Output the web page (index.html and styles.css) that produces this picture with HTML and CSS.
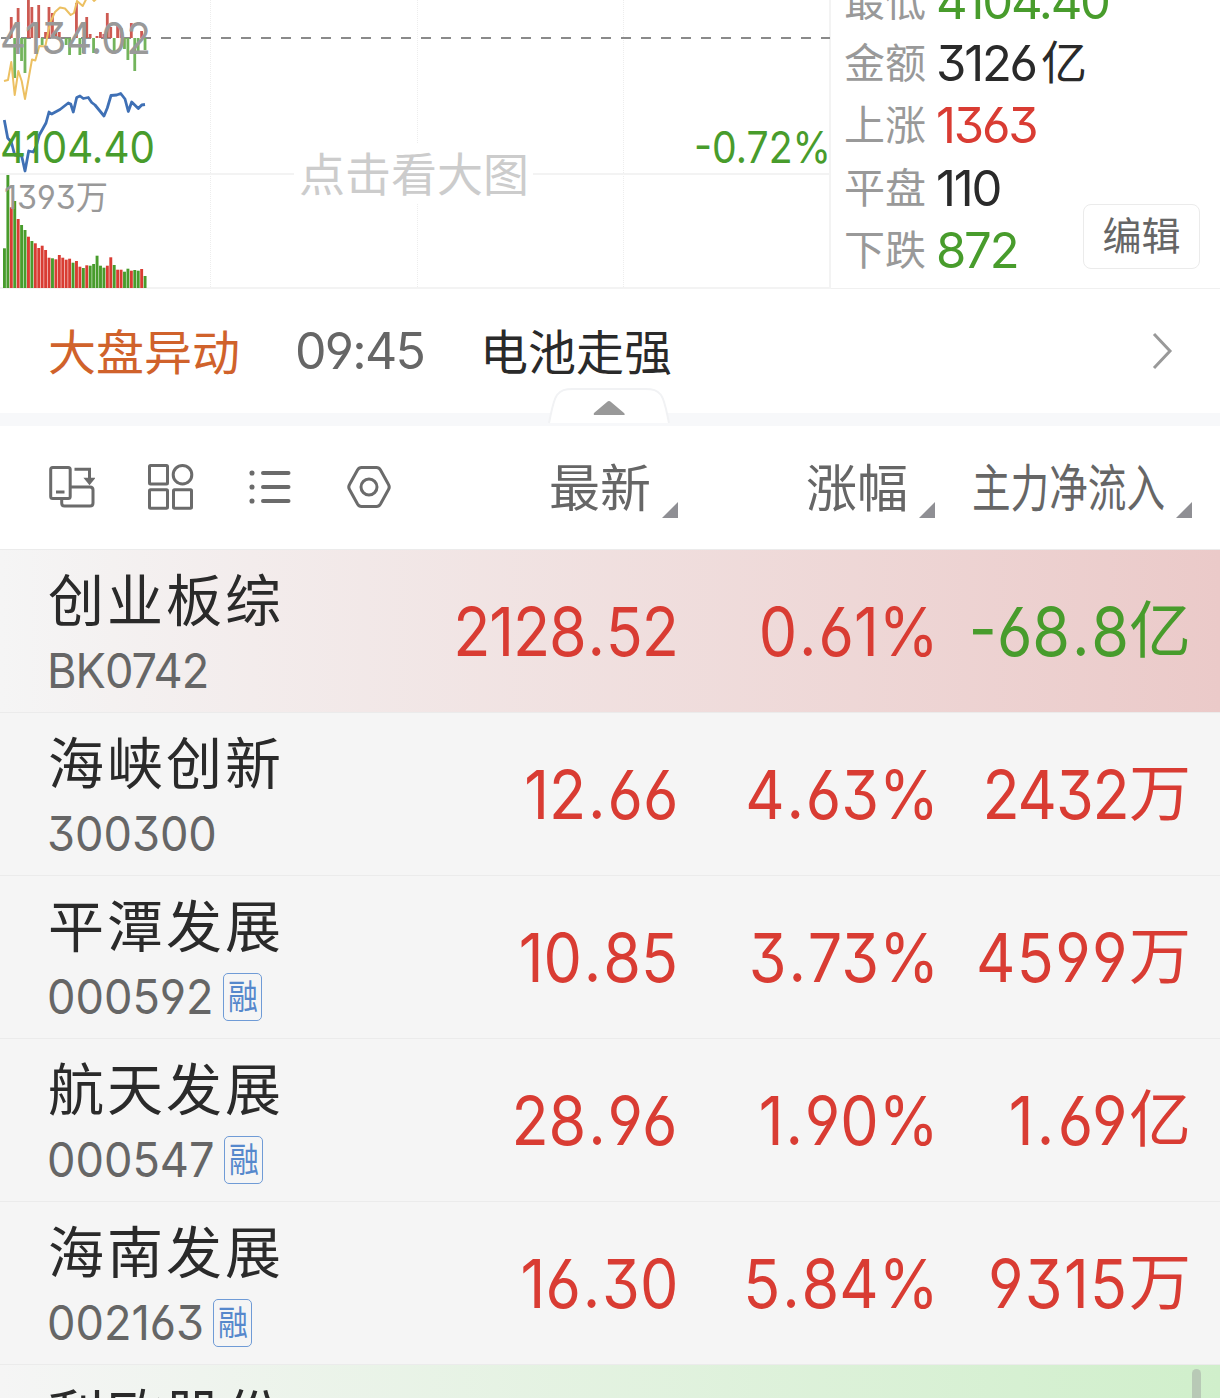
FILE: index.html
```html
<!DOCTYPE html>
<html lang="zh-CN">
<head>
  <meta charset="UTF-8">
  <title>自选股</title>
  <meta name="viewport" content="width=device-width, initial-scale=1">
  <link rel="stylesheet" href="styles.css">
</head>
<body>

  <!-- 大盘分时 -->
  <section class="market">
    <svg class="chart" width="831" height="289" viewBox="0 0 831 289">
      <g class="grid-dots">
        <path d="M210.5 0V288M417.5 0V288M623.5 0V288" />
      </g>
      <path class="grid" d="M0 174H831M0 288H831M830 0V289" />
      <path class="mid-line" d="M1 38H830" />
      <g id="diff-bars"></g>
      <g id="volume-bars"></g>
      <polyline class="line-avg" points="4,81 8,80 11.3,62 14.7,95 18.3,71 21.7,81 25,99 28.7,78 32,59.5 35.3,60.5 39.3,46 45.3,46.5 50,23 55,12 60,7.5 65,8.5 70.7,15 74,13 77,1 82.7,6 87.3,-3 91.7,-2 94,1 97.3,-2" />
      <polyline class="line-price" points="4.3,120 7.7,138 11.3,142 14.7,155 21.7,156 25,171 28.7,151 33.3,152 36,147 39.3,135 46,123 49,112 51.7,114 60,109.5 68.3,103 70.7,104 73.3,112 76.7,97.5 80,96 83.3,98.5 88.3,97.5 91.7,102.5 95,105 104,116 107.3,108 111,95.5 116.7,95 120.7,93.5 125,99 128.3,111.5 131.7,102 138.3,108.5 141.7,105 145,104.5" />
      <text class="label-gray" x="0" y="54" font-size="44" textLength="151" lengthAdjust="spacingAndGlyphs">4134.02</text>
      <text class="label-green" x="0" y="162.500" font-size="44" textLength="155" lengthAdjust="spacingAndGlyphs">4104.40</text>
      <text class="label-green" x="694" y="162.500" font-size="44" textLength="137" lengthAdjust="spacingAndGlyphs">-0.72%</text>
      <text class="label-gray" x="4" y="209" font-size="33" textLength="104" lengthAdjust="spacingAndGlyphs">1393万</text>
      <rect x="294" y="144" width="239" height="60" fill="#fff" />
      <text class="label-tip" x="299" y="191" font-size="46">点击看大图</text>
    </svg>

    <div class="stats">
      <div class="stat"><span class="stat-name">最低</span><span class="stat-value down">4104.40</span></div>
      <div class="stat"><span class="stat-name">金额</span><span class="stat-value">3126<span class="stat-unit">亿</span></span></div>
      <div class="stat"><span class="stat-name">上涨</span><span class="stat-value up">1363</span></div>
      <div class="stat"><span class="stat-name">平盘</span><span class="stat-value">110</span></div>
      <div class="stat"><span class="stat-name">下跌</span><span class="stat-value down">872</span></div>
      <button class="edit-button">编辑</button>
    </div>
  </section>

  <!-- 大盘异动 -->
  <section class="news">
    <span class="news-tag">大盘异动</span>
    <span class="news-time">09:45</span>
    <span class="news-title">电池走强</span>
    <svg class="news-arrow" width="24" height="40" viewBox="0 0 24 40">
      <path d="M4 3L20 20L4 37" />
    </svg>
  </section>

  <div class="divider">
    <svg class="collapse-tab" width="124" height="37" viewBox="0 0 124 37">
      <path class="tab-shape" d="M2 36C5 22 6 14 10 8C14 3 18 2 26 2H98C106 2 110 3 114 8C118 14 119 22 122 36" />
      <path class="tab-arrow" d="M47 26Q46 28 48 28H76Q79 28 77 26L64 15Q62 13 60 15Z" />
    </svg>
  </div>

  <!-- 工具栏 + 表头 -->
  <header class="toolbar">
    <div class="tools">
      <svg width="48" height="48" viewBox="0 0 48 48">
        <rect x="3.700" y="4.500" width="19.500" height="31" rx="2" />
        <path d="M9 29H17.500M23.500 24H43Q46 24 46 27V40Q46 43 43 43H17.500Q14.700 43 14.700 40V36M27.500 6.300H42.500V16" />
        <path class="solid" d="M38 15.500H47L42.500 21Z" />
      </svg>
      <svg width="48" height="48" viewBox="0 0 48 48">
        <rect x="3.500" y="2.500" width="18" height="18.500" rx="1" />
        <circle cx="36.500" cy="11.700" r="9.300" />
        <rect x="3.500" y="26.800" width="18" height="18.500" rx="1" />
        <rect x="27.500" y="26.800" width="18" height="18.500" rx="1" />
      </svg>
      <svg width="48" height="48" viewBox="0 0 48 48">
        <path class="thick" d="M17 10H42.500M17 24H42.500M17 38H42.500" />
        <circle class="solid" cx="6" cy="10" r="1.800" />
        <circle class="solid" cx="6" cy="24" r="1.800" />
        <circle class="solid" cx="6" cy="38" r="1.800" />
      </svg>
      <svg width="48" height="48" viewBox="0 0 48 48">
        <path d="M16.500 4.500H31.500Q34 4.500 35.500 7L43.500 21.500Q45 24 43.500 26.500L35.500 41Q34 43.500 31.500 43.500H16.500Q14 43.500 12.500 41L4.500 26.500Q3 24 4.500 21.500L12.500 7Q14 4.500 16.500 4.500Z" />
        <circle cx="24" cy="24" r="8" />
      </svg>
    </div>
    <div class="col-head price">最新<i class="sort"></i></div>
    <div class="col-head change">涨幅<i class="sort"></i></div>
    <div class="col-head flow"><span class="narrow">主力净流入</span><i class="sort"></i></div>
  </header>

  <!-- 股票列表 -->
  <main class="list">
    <div class="row flash-red">
      <div class="stock">
        <div class="name">创业板综</div>
        <div class="code"><span class="code-num bk">BK0742</span></div>
      </div>
      <div class="cell price up"><span class="num tight">2128<i>.</i>52</span></div>
      <div class="cell change up"><span class="num">0<i>.</i>61%</span></div>
      <div class="cell flow down"><span class="num">-68<i>.</i>8</span><span class="unit">亿</span></div>
    </div>
    <div class="row">
      <div class="stock">
        <div class="name">海峡创新</div>
        <div class="code"><span class="code-num">300300</span></div>
      </div>
      <div class="cell price up"><span class="num">12<i>.</i>66</span></div>
      <div class="cell change up"><span class="num">4<i>.</i>63%</span></div>
      <div class="cell flow up"><span class="num tight">2432</span><span class="unit">万</span></div>
    </div>
    <div class="row">
      <div class="stock">
        <div class="name">平潭发展</div>
        <div class="code"><span class="code-num">000592</span><span class="badge"><span>融</span></span></div>
      </div>
      <div class="cell price up"><span class="num">10<i>.</i>85</span></div>
      <div class="cell change up"><span class="num">3<i>.</i>73%</span></div>
      <div class="cell flow up"><span class="num wide">4599</span><span class="unit">万</span></div>
    </div>
    <div class="row">
      <div class="stock">
        <div class="name">航天发展</div>
        <div class="code"><span class="code-num">000547</span><span class="badge"><span>融</span></span></div>
      </div>
      <div class="cell price up"><span class="num">28<i>.</i>96</span></div>
      <div class="cell change up"><span class="num">1<i>.</i>90%</span></div>
      <div class="cell flow up"><span class="num wide">1<i>.</i>69</span><span class="unit">亿</span></div>
    </div>
    <div class="row">
      <div class="stock">
        <div class="name">海南发展</div>
        <div class="code"><span class="code-num">002163</span><span class="badge"><span>融</span></span></div>
      </div>
      <div class="cell price up"><span class="num">16<i>.</i>30</span></div>
      <div class="cell change up"><span class="num">5<i>.</i>84%</span></div>
      <div class="cell flow up"><span class="num wide">9315</span><span class="unit">万</span></div>
    </div>
    <div class="row flash-green">
      <div class="stock">
        <div class="name">利欧股份</div>
      </div>
      <i class="scroll-thumb"></i>
    </div>
  </main>

  <script>
    const RED = "#d93c33";
    const GREEN = "#489c2c";
    const STEP = 3.43;

    // 成交量: 颜色 + 高度
    const volumes = "g39.7 g113 r80.7 g87 r69 g63 g58 r51.3 g47 r44.7 r40 r42.3 r38 r30.3 g29.7 r28.7 r33 r30.3 r28.3 r29.3 g25.3 r27 r21.3 g20 r22.7 g22.3 g24 g32.3 g22.3 g20.3 r22.3 r30.7 g23 r18.3 r18.3 g16.3 g19.3 r17.3 g18 g17.3 r19 g12".split(" ");

    // 红绿柱: 中轴上方为正
    const diffs = [0, 0, 21, -40, 30, -23, -35, 40, 31, 0, 33, -7, 6, 31, 25, 6, 6, 0, -7, -17, 0, 35, -17, -15, 21, 4, -15, 2, 6, 4, 25, 11, -14, 13, 10, -11, -22, 15, -33, -15, 7, -12];

    function addBar(parent, x, y, w, h, color) {
      const rect = document.createElementNS("http://www.w3.org/2000/svg", "rect");
      rect.setAttribute("x", x);
      rect.setAttribute("y", y);
      rect.setAttribute("width", w);
      rect.setAttribute("height", h);
      rect.setAttribute("fill", color);
      parent.appendChild(rect);
    }

    const volumeBars = document.getElementById("volume-bars");
    volumes.forEach((v, i) => {
      const h = parseFloat(v.slice(1));
      addBar(volumeBars, 3 + i * STEP, 288 - h, 2.9, h, v[0] === "r" ? RED : GREEN);
    });

    const diffBars = document.getElementById("diff-bars");
    diffs.forEach((v, i) => {
      if (!v) return;
      addBar(diffBars, 3 + i * STEP, v > 0 ? 38 - v : 38, 2.8, Math.abs(v), v > 0 ? "#cd5a52" : "#73b45c");
    });
  </script>
</body>
</html>
```
FILE: styles.css
```css
* {
  box-sizing: border-box;
}

body {
  margin: 0;
  width: 1220px;
  height: 1398px;
  display: flex;
  flex-direction: column;
  overflow: hidden;
  background: #fff;
  color: #2a2a2a;
  font-family: Inter, "Noto Sans CJK SC", sans-serif;
  font-feature-settings: "cv03", "cv04", "cv09";
}

.up {
  color: #d93c33;
}

.down {
  color: #489c2c;
}

/* 大盘 */
.market {
  display: flex;
  flex: none;
  height: 289px;
  border-bottom: 1px solid #f0f0f0;
}

.chart {
  display: block;
  flex: none;
}

.grid {
  fill: none;
  stroke: #f3f3f3;
  stroke-width: 2;
}

.grid-dots {
  fill: none;
  stroke: #ededed;
  stroke-dasharray: 1 1;
}

.mid-line {
  stroke: #8a8a8a;
  stroke-width: 2;
  stroke-dasharray: 10 10;
}

.line-avg {
  fill: none;
  stroke: #ecc062;
  stroke-width: 2;
  stroke-linejoin: round;
}

.line-price {
  fill: none;
  stroke: #3f70b5;
  stroke-width: 2.8;
  stroke-linejoin: round;
}

.label-gray {
  fill: #999;
}

.label-green {
  fill: #489c2c;
}

.label-tip {
  fill: #ccc;
}

.stats {
  position: relative;
  flex: 1;
  height: 288px;
  padding-left: 13px;
  display: flex;
  flex-direction: column;
  justify-content: flex-end;
  padding-bottom: 6px;
  overflow: hidden;
}

.stat {
  flex: none;
  display: flex;
  align-items: center;
  height: 62.3px;
  line-height: 62px;
}

.stat-name {
  width: 92px;
  padding-bottom: 2px;
  font-size: 41px;
  line-height: 60px;
  color: #999;
}

.stat-value {
  font-size: 49px;
  letter-spacing: -2.2px;
}

.stat-unit {
  margin-left: 5px;
  font-size: 46px;
  line-height: 1;
  vertical-align: 2px;
}

.edit-button {
  position: absolute;
  right: 20px;
  bottom: 19px;
  width: 117px;
  height: 65px;
  padding: 0 0 1px;
  border: 1px solid #ebebeb;
  border-radius: 8px;
  background: #fff;
  color: #666;
  font: 39px/56px Inter, "Noto Sans CJK SC", sans-serif;
}

/* 大盘异动 */
.news {
  display: flex;
  flex: none;
  align-items: center;
  height: 124px;
  padding: 0 46px 0 48px;
  font-size: 48px;
}

.news-tag,
.news-title {
  padding-bottom: 5px;
}

.news-tag {
  width: 247px;
  color: #d0622b;
}

.news-time {
  width: 185px;
  font-size: 50px;
  letter-spacing: -1.7px;
  color: #666;
}

.news-arrow {
  margin-left: auto;
  fill: none;
  stroke: #999;
  stroke-width: 3;
}

.divider {
  position: relative;
  flex: none;
  height: 13px;
  background: #f7f8fa;
}

.collapse-tab {
  position: absolute;
  left: 547px;
  bottom: 2px;
}

.tab-shape {
  fill: #fff;
  stroke: #f1f2f4;
  stroke-width: 2;
}

.tab-arrow {
  fill: #999;
}

/* 表头 */
.toolbar,
.row {
  display: grid;
  grid-template-columns: 350px 280px 257px 257px;
  padding-left: 48px;
}

.toolbar {
  flex: none;
  height: 124px;
  border-bottom: 1px solid #ebebeb;
}

.tools {
  display: flex;
  align-items: center;
  gap: 51.3px;
  height: 122px;
  margin-left: -1px;
}

.tools svg {
  flex: none;
  fill: none;
  stroke: #6b6b6b;
  stroke-width: 3;
}

.tools .solid {
  fill: #6b6b6b;
  stroke-width: 1.5;
}

.tools .thick {
  stroke-width: 4;
  stroke-linecap: round;
}

.col-head {
  display: flex;
  justify-content: flex-end;
  align-items: center;
  height: 122px;
  padding-top: 4px;
  font-size: 51px;
  line-height: 118px;
  color: #666;
}

.narrow {
  display: block;
  width: 193px;
  white-space: nowrap;
  transform: scaleX(0.757);
  transform-origin: 0 50%;
}

.sort {
  width: 16px;
  height: 16px;
  margin: 42px 0 0 11px;
  background: #8f8f94;
  clip-path: polygon(100% 0, 100% 100%, 0 100%);
}

/* 列表 */
.list {
  flex: 1;
  min-height: 0;
  overflow: hidden;
}

.row {
  height: 163px;
  background: #f5f5f5;
  border-bottom: 1px solid #ebebeb;
}

.flash-red {
  background: linear-gradient(to right, #f5f5f5, #ebcac9);
}

.flash-green {
  position: relative;
  background: linear-gradient(to right, #f5f5f5, #d0efcb);
}

.stock {
  padding-top: 16px;
}

.name {
  height: 72px;
  font-size: 56px;
  line-height: 71px;
  letter-spacing: 3px;
}

.code {
  display: flex;
  align-items: center;
  height: 65px;
  margin-left: -1px;
  font-size: 48px;
  color: #666;
}

.code-num {
  transform: scaleX(0.94);
  transform-origin: 0 50%;
}

.bk {
  letter-spacing: -1px;
}

.badge {
  display: flex;
  justify-content: center;
  width: 39px;
  height: 48px;
  margin-left: -1px;
  border: 1.5px solid #6f9bd6;
  border-radius: 5px;
  color: #5688cc;
  font-size: 34px;
  line-height: 45px;
}

.badge span {
  transform: scaleX(0.88);
}

.cell {
  text-align: right;
  font-size: 67px;
  line-height: 163px;
  white-space: nowrap;
}

.cell.change {
  margin-right: -4px;
}

.cell.flow {
  padding-right: 1px;
}

/* 数字压窄一些, 小数点两侧留空 */
.num {
  display: inline-block;
  transform: scaleX(0.91);
  transform-origin: 100% 50%;
}

.num i {
  margin: 0 2px;
  font-style: normal;
}

.tight {
  letter-spacing: -1.2px;
}

.wide {
  letter-spacing: 1.5px;
}

.unit {
  font-size: 62px;
  line-height: 1;
  vertical-align: 3px;
}

.scroll-thumb {
  position: absolute;
  top: 4px;
  right: 19px;
  width: 9px;
  height: 60px;
  border-radius: 5px;
  background: #b8c9b6;
}
```
